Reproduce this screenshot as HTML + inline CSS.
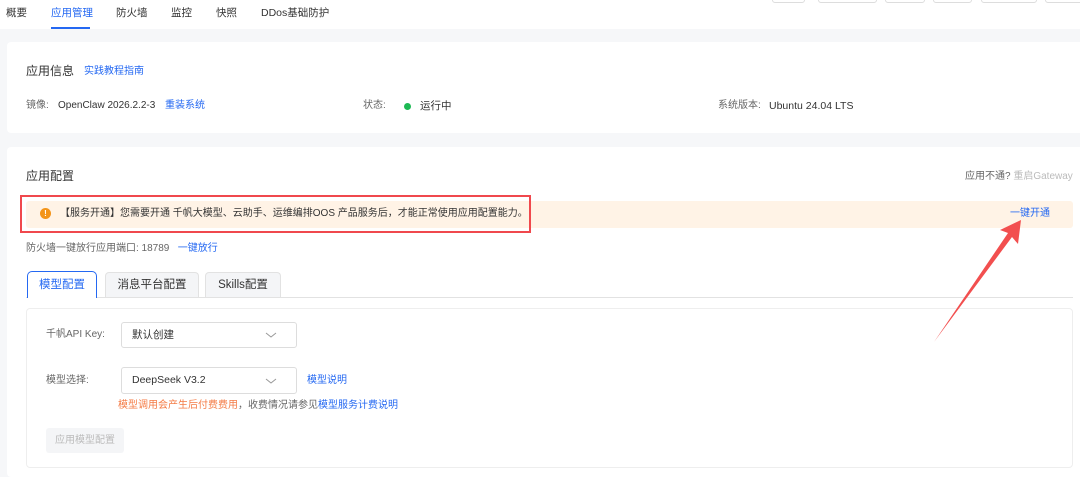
<!DOCTYPE html>
<html><head><meta charset="utf-8"><style>
*{margin:0;padding:0;box-sizing:border-box}
body{width:1080px;height:472px;overflow:hidden;background:#f6f7f9;font-family:"Liberation Sans","Noto Sans CJK SC",sans-serif;font-size:10px;color:#333;position:relative}
.a{position:absolute;white-space:nowrap;line-height:14px}
.blue{color:#2468f2}
.g{color:#666}
.sel{position:absolute;border:1px solid #ddd;border-radius:3px;padding:0 10px;font-size:10.5px;line-height:24px;color:#333}
</style></head><body>
<div class="a" style="left:0;top:0;width:1080px;height:29px;background:#fff"></div>
<div class="a" style="left:6px;top:6px;font-size:10.5px">概要</div>
<div class="a blue" style="left:51px;top:6px;font-size:10.5px">应用管理</div>
<div class="a" style="left:51px;top:27px;width:39px;height:2px;background:#2468f2"></div>
<div class="a" style="left:116px;top:6px;font-size:10.5px">防火墙</div>
<div class="a" style="left:171px;top:6px;font-size:10.5px">监控</div>
<div class="a" style="left:216px;top:6px;font-size:10.5px">快照</div>
<div class="a" style="left:261px;top:6px;font-size:10.5px">DDos基础防护</div>
<div class="a" style="left:772px;top:-6px;width:33px;height:9px;border:1px solid #ddd;border-radius:3px;background:#fff"></div>
<div class="a" style="left:818px;top:-6px;width:59px;height:9px;border:1px solid #ddd;border-radius:3px;background:#fff"></div>
<div class="a" style="left:885px;top:-6px;width:40px;height:9px;border:1px solid #ddd;border-radius:3px;background:#fff"></div>
<div class="a" style="left:933px;top:-6px;width:39px;height:9px;border:1px solid #ddd;border-radius:3px;background:#fff"></div>
<div class="a" style="left:981px;top:-6px;width:56px;height:9px;border:1px solid #ddd;border-radius:3px;background:#fff"></div>
<div class="a" style="left:1045px;top:-6px;width:40px;height:9px;border:1px solid #ddd;border-radius:3px;background:#fff"></div>

<div class="a" style="left:7px;top:42px;width:1080px;height:91px;background:#fff;border-radius:4px"></div>
<div class="a" style="left:26px;top:63px;font-size:12px;line-height:16px">应用信息</div>
<div class="a blue" style="left:84px;top:65px;font-size:10px">实践教程指南</div>
<div class="a g" style="left:26px;top:99px">镜像:</div>
<div class="a" style="left:58px;top:99px;font-size:10px">OpenClaw 2026.2.2-3</div>
<div class="a blue" style="left:165px;top:99px">重装系统</div>
<div class="a g" style="left:363px;top:99px">状态:</div>
<div class="a" style="left:404px;top:103px;width:7px;height:7px;border-radius:50%;background:#1db954"></div>
<div class="a" style="left:420px;top:99px;font-size:10.5px">运行中</div>
<div class="a g" style="left:718px;top:99px">系统版本:</div>
<div class="a" style="left:769px;top:99px;font-size:10.5px">Ubuntu 24.04 LTS</div>

<div class="a" style="left:7px;top:147px;width:1080px;height:330px;background:#fff;border-radius:4px"></div>
<div class="a" style="left:26px;top:168px;font-size:12px;line-height:16px">应用配置</div>
<div class="a g" style="left:965px;top:170px">应用不通? <span style="color:#bbb">重启Gateway</span></div>
<div class="a" style="left:26px;top:201px;width:1047px;height:27px;background:#fff3e6;border-radius:3px"></div>
<div class="a" style="left:20px;top:195px;width:511px;height:38px;border:2px solid #f0484d"></div>
<div class="a" style="left:40px;top:208px;width:11px;height:11px;border-radius:50%;background:#f39419;color:#fff;font-size:8px;line-height:11px;text-align:center;font-weight:bold">!</div>
<div class="a" style="left:60px;top:207px">【服务开通】您需要开通 千帆大模型、云助手、运维编排OOS 产品服务后，才能正常使用应用配置能力。</div>
<div class="a blue" style="left:1010px;top:207px">一键开通</div>
<div class="a g" style="left:26px;top:242px">防火墙一键放行应用端口: 18789 &nbsp; <span class="blue">一键放行</span></div>

<div class="a" style="left:26px;top:297px;width:1047px;height:1px;background:#e2e2e2"></div>
<div class="a" style="left:27px;top:271px;width:70px;height:27px;border:1px solid #2468f2;border-bottom:none;border-radius:5px 5px 0 0;background:#fff;color:#2468f2;font-size:11.5px;text-align:center;line-height:27px">模型配置</div>
<div class="a" style="left:105px;top:272px;width:94px;height:25px;border:1px solid #e2e2e2;border-bottom:none;border-radius:4px 4px 0 0;background:#f4f5f7;font-size:11.5px;text-align:center;line-height:25px">消息平台配置</div>
<div class="a" style="left:205px;top:272px;width:76px;height:25px;border:1px solid #e2e2e2;border-bottom:none;border-radius:4px 4px 0 0;background:#f4f5f7;font-size:11.5px;text-align:center;line-height:25px">Skills配置</div>

<div class="a" style="left:26px;top:308px;width:1047px;height:160px;border:1px solid #eee;border-radius:4px"></div>
<div class="a g" style="left:46px;top:328px">千帆API Key:</div>
<div class="sel" style="left:121px;top:322px;width:176px;height:26px">默认创建</div>
<div class="a g" style="left:46px;top:374px">模型选择:</div>
<div class="sel" style="left:121px;top:367px;width:176px;height:27px;line-height:25px">DeepSeek V3.2</div>
<svg class="a" style="left:0;top:0" width="1080" height="472"><path d="M266 333l5 4 5-4M266 379l5 4 5-4" fill="none" stroke="#999" stroke-width="1"/></svg>
<div class="a blue" style="left:307px;top:374px">模型说明</div>
<div class="a" style="left:118px;top:399px;color:#f47b45">模型调用会产生后付费费用<span class="g">，收费情况请参见</span><span class="blue">模型服务计费说明</span></div>
<div class="a" style="left:46px;top:428px;width:78px;height:25px;background:#f4f5f7;border-radius:3px;color:#bbb;text-align:center;line-height:25px">应用模型配置</div>

<svg class="a" style="left:0;top:0" width="1080" height="472"><polygon points="1021,220 1018,244 1012,237 934,342 1008,233 1000,230" fill="#f24f4f"/></svg>
</body></html>
